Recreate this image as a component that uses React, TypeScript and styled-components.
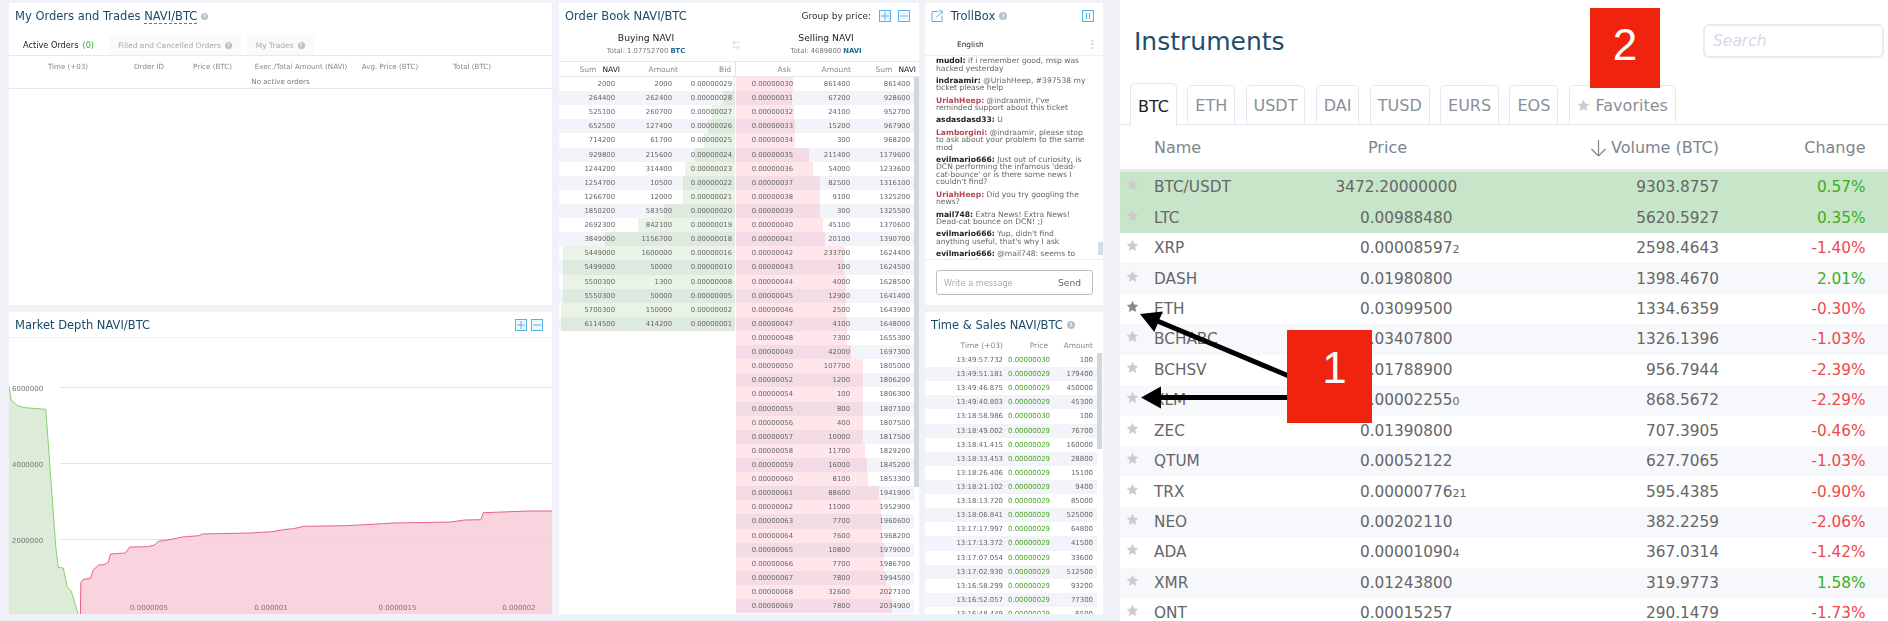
import React from "react"
import styled, { createGlobalStyle } from "styled-components"

const GlobalStyle = createGlobalStyle`
  html, body {
    margin: 0;
    padding: 0;
    background: #fff;
  }
  * {
    box-sizing: border-box;
  }
`

const Page = styled.div`
  position: relative;
  display: flex;
  width: 1888px;
  height: 621px;
  overflow: hidden;
  font-family: "DejaVu Sans", sans-serif;
`

const Dashboard = styled.div`
  display: grid;
  grid-template-columns: 543px 360px 177px;
  column-gap: 7px;
  width: 1120px;
  height: 621px;
  padding: 3px 0 7px 9px;
  background: #f0f2f8;
  filter: blur(0.3px);
`

const Stack = styled.div<{ $nudge?: number }>`
  display: flex;
  flex-direction: column;
  gap: 7px;
  min-height: 0;
  margin-left: ${(p) => p.$nudge || 0}px;
`

const Panel = styled.section`
  position: relative;
  display: flex;
  flex-direction: column;
  flex: 1;
  min-height: 0;
  background: #fff;
  overflow: hidden;
`

const PanelHeader = styled.header<{ $lined?: boolean }>`
  display: flex;
  align-items: center;
  flex: none;
  height: 26px;
  padding: 0 9px 0 6px;
  gap: 4px;
  border-bottom: ${(p) => (p.$lined ? "1px solid #f0f2f6" : "none")};
`

const Title = styled.h2`
  margin: 0;
  font-size: 11.5px;
  font-weight: 400;
  color: #1b4a68;
  white-space: nowrap;
`

const PairLink = styled.span`
  border-bottom: 1px dashed #2f86b5;
`

const HelpDot = styled.span<{ $size?: number }>`
  display: inline-flex;
  align-items: center;
  justify-content: center;
  flex: none;
  width: ${(p) => p.$size || 7}px;
  height: ${(p) => p.$size || 7}px;
  border-radius: 50%;
  background: #b4c2cc;
  color: #fff;
  font-size: 5px;
  font-weight: 700;
`

const HeaderActions = styled.div<{ $gap?: number }>`
  display: flex;
  align-items: center;
  gap: ${(p) => p.$gap || 4}px;
  margin-left: auto;
`

const IconBox = styled.span`
  display: block;
  width: 12px;
  height: 12px;
  line-height: 0;
`

const ZoomButton = ({ minus }: { minus?: boolean }) => (
  <IconBox>
    <svg width="12" height="12" viewBox="0 0 12 12">
      <rect x="0.5" y="0.5" width="11" height="11" fill="#eef7fc" stroke="#58b3e2" />
      <path d="M2 6h8" stroke="#58b3e2" />
      {!minus && <path d="M6 2v8" stroke="#58b3e2" />}
    </svg>
  </IconBox>
)

/* My orders */

const Tabs = styled.div`
  display: flex;
  flex: none;
  height: 21px;
  margin-top: 6px;
  padding-left: 6px;
  gap: 6px;
  border-bottom: 1px solid #e6e9ef;
`

const OrderTab = styled.div<{ $active?: boolean }>`
  display: flex;
  align-items: center;
  gap: 4px;
  height: 20px;
  padding: 0 ${(p) => (p.$active ? "8px" : "9px")};
  font-size: ${(p) => (p.$active ? "8.2px" : "7.5px")};
  color: ${(p) => (p.$active ? "#222" : "#a6adb4")};
  background: ${(p) => (p.$active ? "#fff" : "#fafafa")};
  margin-right: ${(p) => (p.$active ? "1px" : "0")};
`

const GreenCount = styled.span`
  color: #27b01e;
`

const OrderGrid = styled.div`
  display: grid;
  grid-template-columns: 118px 44px 83px 94px 84px 80px 40px;
  flex: none;
  align-items: center;
  height: 20px;
  padding-top: 1px;
  font-size: 7.1px;
  color: #888;
  text-align: center;
  white-space: nowrap;
`

const EmptyRow = styled.div`
  flex: none;
  height: 13px;
  font-size: 7.1px;
  line-height: 11px;
  color: #777;
  text-align: center;
  border-bottom: 1px solid #e6e9ef;
`

/* Depth chart */

const ChartBox = styled.div`
  flex: 1;
  min-height: 0;
  line-height: 0;
`

const AxisText = styled.text`
  font-family: "DejaVu Sans", sans-serif;
  font-size: 7px;
  fill: #777;
`

// traced from the picture, x scaled 2.8 and y scaled 3 with the chart's corner at 24,112
const greenLine = [[24, 255], [30, 298], [50, 316], [70, 321], [127, 326], [155, 740], [162, 800], [176, 802], [187, 860], [198, 870], [205, 895], [218, 942]]
const redLine = [[224, 942], [225, 846], [232, 836], [252, 833], [260, 808], [275, 793], [290, 792], [302, 785], [308, 760], [350, 757], [362, 739], [412, 738], [432, 733], [442, 722], [480, 716], [510, 709], [555, 705], [565, 700], [700, 697], [760, 693], [800, 686], [820, 684], [850, 677], [970, 675], [1040, 671], [1100, 667], [1260, 664], [1300, 658], [1345, 657], [1352, 636], [1480, 631], [1546, 631]]

const pts = (line: number[][]) =>
  line.map(([x, y]) => `${((x - 24) / 2.8).toFixed(1)},${((y - 112) / 3).toFixed(1)}`).join(" ")

const DepthChart = () => (
  <ChartBox>
    <svg width="543" height="277" viewBox="0 0 543 277">
      {[49, 125, 201].map((y) => (
        <path key={y} d={`M51 ${y + 0.5}H543`} stroke="#e2e2e2" strokeWidth="1" />
      ))}
      <polygon points={`0,277 ${pts(greenLine)}`} fill="#dcecd8" />
      <polyline points={pts(greenLine)} fill="none" stroke="#6cc84c" strokeWidth="0.8" />
      <polygon points={`${pts(redLine)} 543,277`} fill="#f9d2dc" fillOpacity="0.95" />
      <polyline points={pts(redLine)} fill="none" stroke="#e0436a" strokeWidth="0.8" />
      <AxisText x="3" y="52.5">6000000</AxisText>
      <AxisText x="3" y="128.5">4000000</AxisText>
      <AxisText x="3" y="204.5">2000000</AxisText>
      <AxisText x="140" y="272" textAnchor="middle">0.0000005</AxisText>
      <AxisText x="262" y="272" textAnchor="middle">0.000001</AxisText>
      <AxisText x="388.5" y="272" textAnchor="middle">0.0000015</AxisText>
      <AxisText x="510" y="272" textAnchor="middle">0.000002</AxisText>
    </svg>
  </ChartBox>
)

/* Order book */

const GroupLabel = styled.span`
  margin-right: 1px;
  font-size: 9px;
  color: #333;
`

const BookSummary = styled.div`
  display: grid;
  grid-template-columns: 174px 6px 174px;
  flex: none;
  height: 32px;
  text-align: center;
`

const SideName = styled.div`
  margin-top: 3px;
  font-size: 9.2px;
  line-height: 11px;
  color: #222;
`

const SideTotal = styled.div`
  margin-top: 4px;
  font-size: 6.8px;
  line-height: 9px;
  color: #777;

  b {
    color: #1a6a8f;
  }
`

const SwapIcon = styled.div`
  margin-top: 11px;
  margin-left: -1px;
  line-height: 0;
`

const BookColumns = styled.div`
  display: flex;
  flex: 1;
  min-height: 0;
`

const BookSide = styled.div<{ $w: number }>`
  flex: none;
  width: ${(p) => p.$w}px;
`

const BookHead = styled.div<{ $cols: string }>`
  display: grid;
  grid-template-columns: ${(p) => p.$cols};
  align-items: center;
  height: 16px;
  font-size: 7.5px;
  color: #888;
  text-align: right;
  border-top: 1px solid #e6e9ef;
  border-bottom: 1px solid #e6e9ef;

  b {
    margin-left: 6px;
    font-weight: 400;
    color: #222;
  }
`

const BookRow = styled.div<{ $cols: string; $stripe: boolean }>`
  position: relative;
  display: grid;
  grid-template-columns: ${(p) => p.$cols};
  align-items: center;
  height: 14.12px;
  font-size: 6.85px;
  color: #666;
  text-align: right;
  background: ${(p) => (p.$stripe ? "#f2f4f9" : "#fff")};
`

const DepthBar = styled.i<{ $side: "buy" | "sell" }>`
  position: absolute;
  top: 0;
  bottom: 0;
  ${(p) => (p.$side === "buy" ? "right: 0;" : "left: 0;")}
  background: ${(p) => (p.$side === "buy" ? "rgba(90, 170, 60, 0.13)" : "rgba(252, 60, 100, 0.13)")};
`

const Cell = styled.span`
  position: relative;
  white-space: nowrap;
`

const Divider = styled.div`
  flex: none;
  width: 1px;
  height: 16px;
  background: #dfe3ec;
`

const AskSide = styled.div`
  flex: none;
  width: 183px;
`

const AskBody = styled.div`
  display: flex;
`

const ScrollTrack = styled.div<{ $h: number }>`
  flex: none;
  width: 5px;

  &::after {
    content: "";
    display: block;
    width: 5px;
    height: ${(p) => p.$h}px;
    background: #cfd8de;
  }
`

const buyRows: [number, number, string, number][] = [
  [2000, 2000, "29", 2], [264400, 262400, "28", 12], [525100, 260700, "27", 23], [652500, 127400, "26", 27],
  [714200, 61700, "25", 31], [929800, 215600, "24", 40], [1244200, 314400, "23", 50], [1254700, 10500, "22", 52],
  [1266700, 12000, "21", 52], [1850200, 583500, "20", 71], [2692300, 842100, "19", 97], [3849000, 1156700, "18", 130],
  [5449000, 1600000, "16", 172], [5499000, 50000, "10", 172], [5500300, 1300, "08", 172], [5550300, 50000, "05", 172],
  [5700300, 150000, "02", 174], [6114500, 414200, "01", 174],
]

const askRows: [string, number, number, number][] = [
  ["30", 861400, 861400, 57], ["31", 67200, 928600, 56], ["32", 24100, 952700, 58], ["33", 15200, 967900, 59],
  ["34", 300, 968200, 59], ["35", 211400, 1179600, 73], ["36", 54000, 1233600, 77], ["37", 82500, 1316100, 84],
  ["38", 9100, 1325200, 84], ["39", 300, 1325500, 84], ["40", 45100, 1370600, 87], ["41", 20100, 1390700, 89],
  ["42", 233700, 1624400, 108], ["43", 100, 1624500, 108], ["44", 4000, 1628500, 110], ["45", 12900, 1641400, 110],
  ["46", 2500, 1643900, 110], ["47", 4100, 1648000, 111], ["48", 7300, 1655300, 111], ["49", 42000, 1697300, 115],
  ["50", 107700, 1805000, 127], ["52", 1200, 1806200, 127], ["54", 100, 1806300, 127], ["55", 800, 1807100, 127],
  ["56", 400, 1807500, 127], ["57", 10000, 1817500, 127], ["58", 11700, 1829200, 129], ["59", 16000, 1845200, 131],
  ["60", 8100, 1853300, 132], ["61", 88600, 1941900, 143], ["62", 11000, 1952900, 145], ["63", 7700, 1960600, 146],
  ["64", 7600, 1968200, 146], ["65", 10800, 1979000, 148], ["66", 7700, 1986700, 148], ["67", 7800, 1994500, 150],
  ["68", 32600, 2027100, 155], ["69", 7800, 2034900, 156],
]

const buyCols = "56px 57px 60px 3px"
const askCols = "57px 57px 60px 4px"

const OrderBook = () => (
  <Panel>
    <PanelHeader>
      <Title>Order Book NAVI/BTC</Title>
      <HeaderActions $gap={7}>
        <GroupLabel>Group by price:</GroupLabel>
        <ZoomButton />
        <ZoomButton minus />
      </HeaderActions>
    </PanelHeader>
    <BookSummary>
      <div>
        <SideName>Buying NAVI</SideName>
        <SideTotal>Total: 1.07752700 <b>BTC</b></SideTotal>
      </div>
      <SwapIcon>
        <svg width="8" height="10" viewBox="0 0 8 10">
          <path d="M8 2.5H1M3 .5 1 2.5l2 2M0 7.5h7M5 5.5l2 2-2 2" fill="none" stroke="#dbe3ee" strokeWidth="1.2" />
        </svg>
      </SwapIcon>
      <div>
        <SideName>Selling NAVI</SideName>
        <SideTotal>Total: 4689800 <b>NAVI</b></SideTotal>
      </div>
    </BookSummary>
    <BookColumns>
      <BookSide $w={176}>
        <BookHead $cols="61px 58px 53px 4px">
          <span>Sum<b>NAVI</b></span>
          <span>Amount</span>
          <span>Bid</span>
        </BookHead>
        {buyRows.map(([sum, amount, bid, bar], i) => (
          <BookRow key={bid} $cols={buyCols} $stripe={i % 2 === 1}>
            <DepthBar $side="buy" style={{ width: bar }} />
            <Cell>{sum}</Cell>
            <Cell>{amount}</Cell>
            <Cell>0.000000{bid}</Cell>
          </BookRow>
        ))}
      </BookSide>
      <Divider />
      <AskSide>
        <BookHead $cols="55px 60px 65px 3px">
          <span>Ask</span>
          <span>Amount</span>
          <span>Sum<b>NAVI</b></span>
        </BookHead>
        <AskBody>
          <BookSide $w={178}>
            {askRows.map(([ask, amount, sum, bar], i) => (
              <BookRow key={ask} $cols={askCols} $stripe={i % 2 === 1}>
                <DepthBar $side="sell" style={{ width: bar }} />
                <Cell>0.000000{ask}</Cell>
                <Cell>{amount}</Cell>
                <Cell>{sum}</Cell>
              </BookRow>
            ))}
          </BookSide>
          <ScrollTrack $h={410} />
        </AskBody>
      </AskSide>
    </BookColumns>
  </Panel>
)

/* Troll box */

const LangBar = styled.div`
  display: flex;
  align-items: center;
  justify-content: space-between;
  flex: none;
  height: 21px;
  margin-top: 6px;
  padding: 0 9px 2px 32px;
  font-size: 7.4px;
  color: #222;
  border-bottom: 1px solid #eceef3;
`

const MenuDots = styled.span`
  display: flex;
  flex-direction: column;
  gap: 1.5px;

  i {
    display: block;
    width: 3px;
    height: 2px;
    background: #dfe3ec;
  }
`

const ChatArea = styled.div`
  position: relative;
  flex: none;
  height: 204px;
  overflow: hidden;
  padding: 1px 14px 0 11px;
  border-bottom: 1px solid #eceef3;
`

const ChatLine = styled.p`
  margin: 0 0 4.8px;
  font-size: 7.6px;
  line-height: 7.5px;
  color: #666;
  white-space: pre-line;
`

const ChatName = styled.b<{ $mod?: boolean }>`
  color: ${(p) => (p.$mod ? "#b04a50" : "#222")};
`

const ChatThumb = styled.div`
  position: absolute;
  top: 186px;
  right: 0;
  width: 5px;
  height: 13px;
  background: #d5dce2;
`

const Composer = styled.div`
  display: flex;
  align-items: center;
  justify-content: space-between;
  flex: none;
  height: 25px;
  margin: 10px 10px 0 11px;
  padding: 0 11px 0 7px;
  border: 1px solid #b9bdc4;
  border-radius: 3px;
`

const ComposerHint = styled.span`
  font-size: 8.2px;
  color: #aaa;
`

const SendLabel = styled.span`
  font-size: 9.1px;
  color: #666;
`

const messages: [string, boolean, string][] = [
  ["mudol", false, "if i remember good, msp was hacked yesterday"],
  ["indraamir", false, "@UriahHeep, #397538 my ticket please help"],
  ["UriahHeep", true, "@indraamir, I've\nreminded support about this ticket"],
  ["asdasdasd33", false, "U"],
  ["Lamborgini", true, "@indraamir, please stop to ask about your problem to the same mod"],
  ["evilmario666", false, "Just out of curiosity, is DCN performing the infamous 'dead-cat-bounce' or is there some news I couldn't find?"],
  ["UriahHeep", true, "Did you try googling the news?"],
  ["mail748", false, "Extra News! Extra News! Dead-cat bounce on DCN! ;)"],
  ["evilmario666", false, "Yup, didn't find anything useful, that's why I ask"],
  ["evilmario666", false, "@mail748: seems to me to be the case"],
]

const TrollBox = () => (
  <Panel>
    <PanelHeader>
      <IconBox>
        <svg width="12" height="12" viewBox="0 0 12 12" fill="none" stroke="#58b3e2">
          <path d="M7 1.5H1v10h10v-6" />
          <path d="M5 7.5 11 1.5M8 .8h3.2V4" />
        </svg>
      </IconBox>
      <Title>&nbsp;TrollBox</Title>
      <HelpDot $size={8}>?</HelpDot>
      <HeaderActions>
        <IconBox>
          <svg width="12" height="12" viewBox="0 0 12 12" fill="none" stroke="#58b3e2">
            <rect x="0.5" y="0.5" width="11" height="11" fill="#f4fafd" />
            <path d="M4.5 3v6M7.5 3v6" />
          </svg>
        </IconBox>
      </HeaderActions>
    </PanelHeader>
    <LangBar>
      English
      <MenuDots><i /><i /><i /></MenuDots>
    </LangBar>
    <ChatArea>
      {messages.map(([name, mod, text], i) => (
        <ChatLine key={i}>
          <ChatName $mod={mod}>{name}:</ChatName> {text}
        </ChatLine>
      ))}
      <ChatThumb />
    </ChatArea>
    <Composer>
      <ComposerHint>Write a message</ComposerHint>
      <SendLabel>Send</SendLabel>
    </Composer>
  </Panel>
)

/* Time and sales */

const SalesHead = styled.div`
  display: grid;
  grid-template-columns: 78px 45px 45px;
  flex: none;
  align-items: center;
  height: 15px;
  font-size: 7.5px;
  color: #888;
  text-align: right;
`

const SalesBody = styled.div`
  display: flex;
  flex: 1;
  min-height: 0;
  overflow: hidden;
`

const SalesRows = styled.div`
  flex: none;
  width: 172px;
`

const SalesRow = styled.div<{ $stripe: boolean }>`
  display: grid;
  grid-template-columns: 78px 47px 43px;
  align-items: center;
  height: 14.12px;
  font-size: 6.95px;
  color: #666;
  text-align: right;
  background: ${(p) => (p.$stripe ? "#f2f4f9" : "#fff")};
`

const SalePrice = styled.span`
  color: #4aa52a;
`

const sales: [string, string, number][] = [
  ["13:49:57.732", "30", 100], ["13:49:51.181", "29", 179400], ["13:49:46.875", "29", 450000], ["13:49:40.803", "29", 45300],
  ["13:18:58.986", "30", 100], ["13:18:49.002", "29", 76700], ["13:18:41.415", "29", 160000], ["13:18:33.453", "29", 28800],
  ["13:18:26.406", "29", 15100], ["13:18:21.102", "29", 9400], ["13:18:13.720", "29", 85000], ["13:18:06.841", "29", 525000],
  ["13:17:17.997", "29", 64800], ["13:17:13.372", "29", 41500], ["13:17:07.054", "29", 33600], ["13:17:02.930", "29", 512500],
  ["13:16:58.299", "29", 93200], ["13:16:52.057", "29", 77300], ["13:16:48.449", "29", 6500],
]

const TimeSales = () => (
  <Panel>
    <PanelHeader>
      <Title>Time &amp; Sales NAVI/BTC</Title>
      <HelpDot $size={8}>?</HelpDot>
    </PanelHeader>
    <SalesHead>
      <span>Time (+03)</span>
      <span>Price</span>
      <span>Amount</span>
    </SalesHead>
    <SalesBody>
      <SalesRows>
        {sales.map(([time, price, amount], i) => (
          <SalesRow key={time} $stripe={i % 2 === 1}>
            <span>{time}</span>
            <SalePrice>0.000000{price}</SalePrice>
            <span>{amount}</span>
          </SalesRow>
        ))}
      </SalesRows>
      <ScrollTrack $h={96} />
    </SalesBody>
  </Panel>
)

/* Instruments */

const Instruments = styled.main`
  display: flex;
  flex-direction: column;
  flex: 1;
  min-width: 0;
  background: #fff;
`

const InstrumentsTop = styled.div`
  display: flex;
  align-items: center;
  justify-content: space-between;
  flex: none;
  height: 82px;
  padding: 0 4px 0 14px;
`

const BigTitle = styled.h1`
  margin: 0;
  font-size: 25px;
  font-weight: 400;
  color: #1d4f6c;
`

const SearchBox = styled.input`
  width: 181px;
  height: 34px;
  padding: 0 8px;
  font-family: inherit;
  font-size: 15.5px;
  font-style: italic;
  border: 2px solid #e9ebf4;
  border-radius: 6px;
  outline: none;

  &::placeholder {
    color: #d5dae8;
  }
`

const CoinTabs = styled.div`
  display: flex;
  align-items: flex-end;
  flex: none;
  gap: 10.3px;
  height: 43px;
  padding-left: 10px;
  border-bottom: 1.5px solid #e6e8f0;
`

const CoinTab = styled.div<{ $active?: boolean }>`
  display: flex;
  align-items: center;
  gap: 6px;
  height: ${(p) => (p.$active ? "43px" : "39px")};
  margin-bottom: ${(p) => (p.$active ? "-1.5px" : "0")};
  padding: ${(p) => (p.$active ? "3px" : "0")} 7px 0;
  font-size: 16px;
  color: ${(p) => (p.$active ? "#222" : "#8a8f96")};
  background: #fff;
  border: 1px solid #e6e8f0;
  border-bottom: none;
  border-radius: 5px 5px 0 0;
`

const InstrumentGrid = styled.div`
  display: grid;
  flex: none;
  grid-template-columns: 34px 206px 140px 219px 146.5px;
  align-items: center;
`

const HeadRow = styled(InstrumentGrid)`
  height: 47px;
  padding-top: 1px;
  font-size: 16px;
  color: #7d858c;
  border-bottom: 3px solid #e8eaf2;
`

const RightCell = styled.span`
  text-align: right;
  white-space: nowrap;
`

const PriceHead = styled.span`
  padding-left: 8px;
`

const VolumeHead = styled(RightCell)`
  display: flex;
  align-items: center;
  justify-content: flex-end;
  gap: 4px;
`

const InstrumentRow = styled(InstrumentGrid)<{ $tone: "hot" | "stripe" | "plain" }>`
  height: 30.45px;
  font-size: 15.3px;
  color: #666;
  background: ${(p) => (p.$tone === "hot" ? "#c7e5c9" : p.$tone === "stripe" ? "#f7f8fb" : "#fff")};
`

const StarCell = styled.span`
  display: block;
  padding-left: 6px;
  margin-top: -5px;
  line-height: 0;
`

const PriceCell = styled.span<{ $big?: boolean }>`
  white-space: nowrap;
  margin-left: ${(p) => (p.$big ? "-24.5px" : "0")};

  small {
    font-size: 11px;
  }
`

const ChangeCell = styled(RightCell)<{ $up: boolean }>`
  color: ${(p) => (p.$up ? "#3cae1c" : "#ee4a4a")};
`

const Star = ({ color }: { color: string }) => (
  <svg width="13" height="13" viewBox="0 0 24 24" fill={color}>
    <path d="M12 1.5l3.2 6.9 7.5.9-5.5 5.2 1.5 7.5L12 18.3 5.3 22l1.5-7.5L1.3 9.3l7.5-.9z" />
  </svg>
)

const instruments: [string, string, string, string, string][] = [
  ["BTC/USDT", "3472.20000000", "", "9303.8757", "0.57%"],
  ["LTC", "0.00988480", "", "5620.5927", "0.35%"],
  ["XRP", "0.00008597", "2", "2598.4643", "-1.40%"],
  ["DASH", "0.01980800", "", "1398.4670", "2.01%"],
  ["ETH", "0.03099500", "", "1334.6359", "-0.30%"],
  ["BCHABC", "0.03407800", "", "1326.1396", "-1.03%"],
  ["BCHSV", "0.01788900", "", "956.7944", "-2.39%"],
  ["XLM", "0.00002255", "0", "868.5672", "-2.29%"],
  ["ZEC", "0.01390800", "", "707.3905", "-0.46%"],
  ["QTUM", "0.00052122", "", "627.7065", "-1.03%"],
  ["TRX", "0.00000776", "21", "595.4385", "-0.90%"],
  ["NEO", "0.00202110", "", "382.2259", "-2.06%"],
  ["ADA", "0.00001090", "4", "367.0314", "-1.42%"],
  ["XMR", "0.01243800", "", "319.9773", "1.58%"],
  ["ONT", "0.00015257", "", "290.1479", "-1.73%"],
]

const coinTabs = ["BTC", "ETH", "USDT", "DAI", "TUSD", "EURS", "EOS"]

/* Annotations laid over the screenshot */

const Callout = styled.div<{ $x: number; $y: number; $w: number; $h: number; $padLeft: number; $padBottom: number }>`
  position: absolute;
  left: ${(p) => p.$x}px;
  top: ${(p) => p.$y}px;
  display: flex;
  align-items: center;
  justify-content: center;
  width: ${(p) => p.$w}px;
  height: ${(p) => p.$h}px;
  padding: 0 0 ${(p) => p.$padBottom}px ${(p) => p.$padLeft}px;
  font-family: "Liberation Sans", sans-serif;
  font-size: 44px;
  color: #fff;
  background: #f0230f;
`

const ArrowLayer = styled.svg`
  position: absolute;
  left: 0;
  top: 0;
`

const App: React.FC = () => {
  return (
    <Page>
      <GlobalStyle />
      <Dashboard>
        <Stack>
          <Panel>
            <PanelHeader>
              <Title>My Orders and Trades <PairLink>NAVI/BTC</PairLink></Title>
              <HelpDot>?</HelpDot>
            </PanelHeader>
            <Tabs>
              <OrderTab $active>Active Orders <GreenCount>(0)</GreenCount></OrderTab>
              <OrderTab>Filled and Cancelled Orders <HelpDot>?</HelpDot></OrderTab>
              <OrderTab>My Trades <HelpDot>?</HelpDot></OrderTab>
            </Tabs>
            <OrderGrid>
              <span>Time (+03)</span>
              <span>Order ID</span>
              <span>Price (BTC)</span>
              <span>Exec./Total Amount (NAVI)</span>
              <span>Avg. Price (BTC)</span>
              <span>Total (BTC)</span>
            </OrderGrid>
            <EmptyRow>No active orders</EmptyRow>
          </Panel>
          <Panel>
            <PanelHeader $lined>
              <Title>Market Depth NAVI/BTC</Title>
              <HeaderActions>
                <ZoomButton />
                <ZoomButton minus />
              </HeaderActions>
            </PanelHeader>
            <DepthChart />
          </Panel>
        </Stack>
        <OrderBook />
        <Stack $nudge={-1}>
          <TrollBox />
          <TimeSales />
        </Stack>
      </Dashboard>
      <Instruments>
        <InstrumentsTop>
          <BigTitle>Instruments</BigTitle>
          <SearchBox placeholder="Search" />
        </InstrumentsTop>
        <CoinTabs>
          {coinTabs.map((tab, i) => (
            <CoinTab key={tab} $active={i === 0}>{tab}</CoinTab>
          ))}
          <CoinTab><Star color="#ccc" />Favorites</CoinTab>
        </CoinTabs>
        <HeadRow>
          <span />
          <span>Name</span>
          <PriceHead>Price</PriceHead>
          <VolumeHead>
            <svg width="17" height="18" viewBox="0 0 17 18" fill="none" stroke="#7d858c" strokeWidth="1.2">
              <path d="M8.5 1v16M1.5 10l7 7 7-7" />
            </svg>
            Volume (BTC)
          </VolumeHead>
          <RightCell>Change</RightCell>
        </HeadRow>
        {instruments.map(([name, price, tail, volume, change], i) => (
          <InstrumentRow key={name} $tone={i < 2 ? "hot" : i % 2 === 1 ? "stripe" : "plain"}>
            <StarCell><Star color={name === "ETH" ? "#8a8a8a" : "#ccc"} /></StarCell>
            <span>{name}</span>
            <PriceCell $big={i === 0}>{price}{tail && <small>{tail}</small>}</PriceCell>
            <RightCell>{volume}</RightCell>
            <ChangeCell $up={!change.startsWith("-")}>{change}</ChangeCell>
          </InstrumentRow>
        ))}
      </Instruments>
      <ArrowLayer width="1888" height="621" viewBox="0 0 1888 621">
        <path d="M1290 376.5 1155 320" stroke="#000" strokeWidth="5" />
        <polygon points="1140,314 1154.3,331.9 1162.7,311.5" fill="#000" />
        <path d="M1290 397.5H1155" stroke="#000" strokeWidth="5" />
        <polygon points="1141,397.5 1161,386.5 1161,408.5" fill="#000" />
      </ArrowLayer>
      <Callout $x={1590} $y={8} $w={70} $h={80} $padLeft={0} $padBottom={7}>2</Callout>
      <Callout $x={1287} $y={330} $w={85} $h={93} $padLeft={10} $padBottom={18}>1</Callout>
    </Page>
  )
}

export default App
